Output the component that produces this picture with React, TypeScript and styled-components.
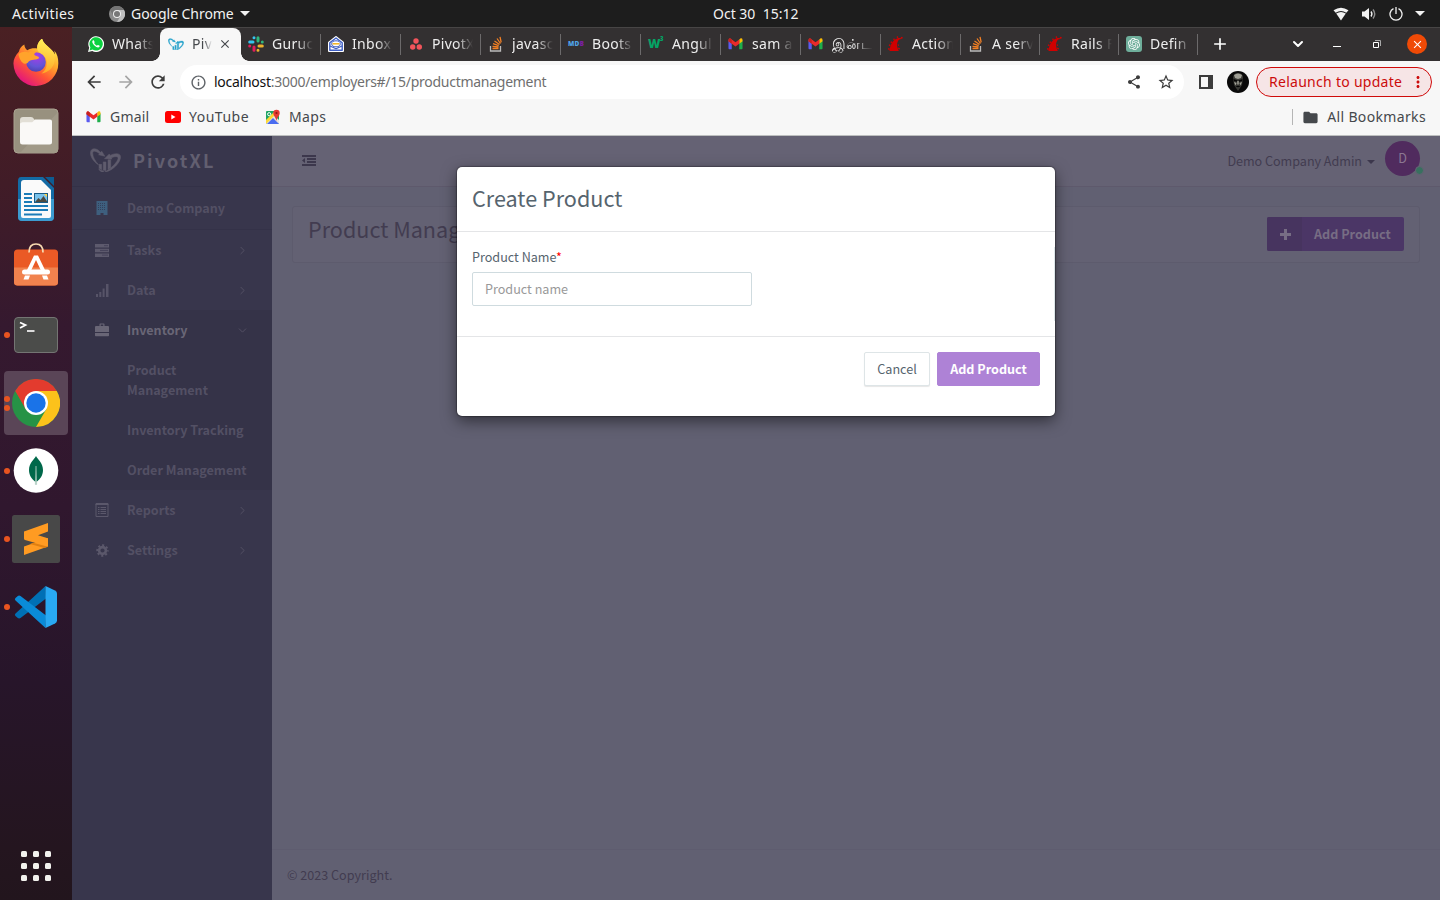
import React from "react";
import styled, { createGlobalStyle, css } from "styled-components";
import { SiOpenai } from "react-icons/si";
import { MdArrowBack, MdArrowForward, MdRefresh, MdShare, MdStarBorder, MdInfoOutline, MdFolder, MdAdd, MdClose, MdMoreVert } from "react-icons/md";
import { ChevronRight, ChevronDown } from "lucide-react";

const GlobalStyle = createGlobalStyle`
  *, *::before, *::after { box-sizing: border-box; }
  html, body { margin: 0; padding: 0; }
  body { width: 1440px; height: 900px; overflow: hidden; }
  svg { display: block; flex: none; }
  button, input { font: inherit; margin: 0; }
`;

const desktopFont = `"Noto Sans", "Open Sans", sans-serif`;
const appFont = `"Noto Sans CJK SC", "Noto Sans", sans-serif`;

/* ---------- desktop ---------- */

const Desktop = styled.div`
  width: 1440px;
  height: 900px;
  display: flex;
  flex-direction: column;
  overflow: hidden;
  background: #1d1d1d;
  font-family: ${desktopFont};
`;

const SystemBar = styled.header`
  height: 27px;
  flex: none;
  display: grid;
  grid-template-columns: 701px auto 1fr;
  align-items: center;
  padding: 0 15px 0 12px;
  color: #f2f2f2;
  font-size: 14px;
  line-height: 26px;
`;

const SystemLeft = styled.div`
  display: flex;
  align-items: center;
`;

const SystemText = styled.span<{ $spacing?: number; $width?: number }>`
  letter-spacing: ${(p) => p.$spacing ?? 0}px;
  width: ${(p) => (p.$width ? `${p.$width}px` : "auto")};
  white-space: pre;
`;

const AppMenu = styled.div`
  display: flex;
  align-items: center;
  margin-left: 34px;
  gap: 6px;
`;

const Caret = styled.span<{ $size?: number; $color?: string }>`
  width: 0;
  height: 0;
  border-left: ${(p) => p.$size ?? 5}px solid transparent;
  border-right: ${(p) => p.$size ?? 5}px solid transparent;
  border-top: ${(p) => p.$size ?? 5}px solid ${(p) => p.$color ?? "#f2f2f2"};
`;

const SystemTray = styled.div`
  display: flex;
  align-items: center;
  justify-content: flex-end;
  gap: 12px;
`;

const Workspace = styled.div`
  flex: 1;
  min-height: 0;
  display: flex;
`;

const Dock = styled.nav`
  width: 72px;
  flex: none;
  display: flex;
  flex-direction: column;
  align-items: center;
  gap: 4px;
  padding: 4px 0 2px;
  background: linear-gradient(#4a2023 0%, #411c27 18%, #35192f 34%, #30172e 55%, #27152a 75%, #24151f 94%, #22151d 100%);
`;

const DockItem = styled.div<{ $active?: boolean; $last?: boolean }>`
  position: relative;
  width: 64px;
  height: 64px;
  flex: none;
  display: flex;
  align-items: center;
  justify-content: center;
  border-radius: 4px;
  background: ${(p) => (p.$active ? "#5a4557" : "transparent")};
  ${(p) => p.$last && css`margin-top: auto;`}
`;

const RunningDots = styled.span`
  position: absolute;
  left: 0;
  top: 0;
  height: 100%;
  display: flex;
  flex-direction: column;
  justify-content: center;
  gap: 3px;
  i {
    width: 6px;
    height: 6px;
    border-radius: 50%;
    background: #e95420;
  }
`;

/* ---------- browser ---------- */

const Browser = styled.main`
  flex: 1;
  min-width: 0;
  display: flex;
  flex-direction: column;
  background: #f7f7f7;
`;

const TabStrip = styled.div`
  height: 34px;
  flex: none;
  display: flex;
  padding-left: 8px;
  background: #333031;
  border-top: 1px solid #474545;
  color: #eeeeee;
`;

const Tab = styled.div<{ $active?: boolean; $width?: number; $divider?: boolean }>`
  position: relative;
  width: ${(p) => p.$width ?? 80}px;
  flex: none;
  display: flex;
  align-items: center;
  gap: 8px;
  padding: 0 0 1px 8px;
  ${(p) =>
    p.$active &&
    css`
      width: 81px;
      margin-right: -1px;
      color: #45484c;
      background: #f7f7f7;
      border-radius: 8px 8px 0 0;
      z-index: 1;
      &::before,
      &::after {
        content: "";
        position: absolute;
        bottom: 0;
        width: 8px;
        height: 8px;
      }
      &::before {
        left: -8px;
        background: radial-gradient(circle at 0 0, transparent 7.5px, #f7f7f7 8px);
      }
      &::after {
        right: -8px;
        background: radial-gradient(circle at 100% 0, transparent 7.5px, #f7f7f7 8px);
      }
    `}
  ${(p) =>
    p.$divider &&
    css`
      &::after {
        content: "";
        position: absolute;
        right: -1px;
        top: 6px;
        width: 1px;
        height: 21px;
        background: #6c6a6b;
      }
    `}
`;

const TabIcon = styled.span`
  width: 16px;
  flex: none;
  display: flex;
  align-items: center;
`;

const TabTitle = styled.span<{ $width?: number; $spacing?: number }>`
  width: ${(p) => p.$width ?? 41}px;
  overflow: hidden;
  white-space: pre;
  font-size: 14px;
  line-height: 20px;
  letter-spacing: ${(p) => p.$spacing ?? 0.3}px;
  mask-image: linear-gradient(90deg, #000 60%, transparent 100%);
`;

const TabClose = styled.span`
  margin-left: -2px;
`;

const WindowControls = styled.div`
  flex: 1;
  display: flex;
  align-items: center;
  padding: 0 0 1px 13px;
`;

const ControlGlyph = styled.span<{ $gap: number }>`
  margin-left: ${(p) => p.$gap}px;
`;

const CloseWindow = styled.span`
  width: 20px;
  height: 20px;
  margin-left: 26px;
  display: flex;
  align-items: center;
  justify-content: center;
  border-radius: 50%;
  background: #f04a06;
  color: #fff;
`;

const Toolbar = styled.div`
  height: 42px;
  flex: none;
  display: flex;
  align-items: center;
  padding: 0 8px 0 12px;
  color: #3c3c3c;
`;

const NavButtons = styled.div`
  width: 96px;
  display: flex;
  gap: 12px;
  svg:nth-child(2) { color: #a5a5a5; }
`;

const AddressBar = styled.div`
  width: 1004px;
  height: 34px;
  display: flex;
  align-items: center;
  padding: 0 9px 0 10px;
  border-radius: 17px;
  background: #fff;
`;

const Url = styled.span`
  flex: 1;
  margin-left: 7px;
  color: #6f6f6f;
  font-size: 14px;
  letter-spacing: -0.27px;
  line-height: 20px;
  b { font-weight: 400; color: #111; }
`;

const AddressActions = styled.div`
  display: flex;
  align-items: center;
  gap: 15px;
`;

const SidePanelIcon = styled.span`
  width: 14px;
  height: 14px;
  margin-left: 15px;
  border: 2px solid #3c3c3c;
  border-right-width: 5px;
`;

const Avatar = styled.span`
  margin: 0 7px 0 14px;
`;

const Relaunch = styled.div`
  width: 176px;
  height: 30px;
  display: flex;
  align-items: center;
  justify-content: space-between;
  padding: 0 4px 1px 12px;
  border: 1px solid #d00a0a;
  border-radius: 15px;
  background: #f6e5e6;
  color: #cc0c0c;
  font-size: 14px;
  letter-spacing: 0.28px;
  line-height: 26px;
  white-space: nowrap;
`;

const BookmarkBar = styled.div`
  height: 33px;
  flex: none;
  display: flex;
  align-items: center;
  padding: 0 14px 1px;
  border-bottom: 1px solid #bdbfbf;
  color: #45484c;
  font-size: 14px;
`;

const Bookmark = styled.div<{ $width?: number; $spacing?: number }>`
  display: flex;
  align-items: center;
  gap: 8px;
  height: 20px;
  margin-top: -3px;
  width: ${(p) => (p.$width ? `${p.$width}px` : "auto")};
  letter-spacing: ${(p) => p.$spacing ?? 0.35}px;
  line-height: 20px;
  white-space: nowrap;
`;

const AllBookmarks = styled(Bookmark)`
  margin-left: auto;
  padding-left: 9px;
  height: 16px;
  border-left: 1px solid #b5b5b5;
`;

/* ---------- web application ---------- */

const WebApp = styled.section`
  position: relative;
  flex: 1;
  min-height: 0;
  display: flex;
  font-family: ${appFont};
  font-size: 12.6px;
  line-height: 20px;
  background: #616072;
  color: #423c50;
`;

const Sidebar = styled.aside`
  width: 200px;
  flex: none;
  background: #38364c;
  color: #535064;
  font-weight: 700;
`;

const Brand = styled.div`
  height: 51px;
  display: flex;
  align-items: center;
  gap: 12px;
  padding: 0 0 2px 18px;
  border-bottom: 1px solid #333147;
  color: #625f70;
  font-size: 18px;
  letter-spacing: 2.1px;
`;

const CompanyRow = styled.div`
  height: 43px;
  display: flex;
  align-items: center;
  padding-left: 22px;
  border-bottom: 1px solid #343248;
`;

const MenuRow = styled.div<{ $lit?: boolean }>`
  height: 40px;
  display: flex;
  align-items: center;
  padding: 0 23px 0 22px;
  color: ${(p) => (p.$lit ? "#696676" : "inherit")};
`;

const MenuIcon = styled.span`
  width: 16px;
  margin-right: 17px;
  display: flex;
  justify-content: center;
`;

const MenuLabel = styled.span`
  flex: 1;
  letter-spacing: -0.02px;
`;

const OpenSection = styled.div`
  background: #353348;
`;

const SubItem = styled.div`
  padding: 10px 20px 10px 55px;
  letter-spacing: -0.02px;
`;

const Content = styled.div`
  flex: 1;
  min-width: 0;
  display: flex;
  flex-direction: column;
`;

const AppHeader = styled.div`
  height: 51px;
  flex: none;
  display: flex;
  align-items: center;
  justify-content: space-between;
  padding: 0 20px 2px 30px;
  background: #656274;
  border-bottom: 1px solid #5e596c;
`;

const UserMenu = styled.div`
  display: flex;
  align-items: center;
  gap: 5px;
`;

const UserName = styled.span`
  padding-top: 2px;
  letter-spacing: -0.03px;
`;

const MenuCaret = styled(Caret)`
  margin-top: 4px;
`;

const UserBadge = styled.div`
  position: relative;
  width: 35px;
  height: 35px;
  margin: -4px 0 0 5px;
  border-radius: 50%;
  background: #502b5e;
  color: #8b7792;
  display: flex;
  align-items: center;
  justify-content: center;
`;

const OnlineDot = styled.span`
  position: absolute;
  right: -4px;
  bottom: 1px;
  width: 9px;
  height: 9px;
  border-radius: 50%;
  border: 1px solid #656274;
  background: #38705f;
`;

const TitleCard = styled.div`
  height: 57px;
  margin: 19px 20px 0;
  padding: 10px 15px 0;
  display: flex;
  justify-content: space-between;
  align-items: flex-start;
  border: 1px solid #5d5b6d;
  border-radius: 3px;
  background: #636173;
`;

const PageTitle = styled.h1`
  margin: 0;
  font-size: 21.6px;
  font-weight: 400;
  line-height: 24px;
`;

const AddButton = styled.div`
  width: 137px;
  height: 34px;
  display: flex;
  align-items: center;
  border-radius: 2px;
  background: #4b3666;
  color: #776d84;
  font-weight: 700;
`;

const AddButtonIcon = styled.span`
  width: 35px;
  height: 34px;
  margin-right: 12px;
  padding-left: 13px;
  display: flex;
  align-items: center;
  background: #47345f;
  border-radius: 2px 0 0 2px;
`;

const Footer = styled.footer`
  height: 51px;
  margin-top: auto;
  padding: 15px;
  border-top: 1px solid #5e5c6f;
`;

const Modal = styled.div`
  position: absolute;
  left: 385px;
  top: 31px;
  width: 598px;
  height: 249px;
  display: flex;
  flex-direction: column;
  border-radius: 5px;
  background: #fff;
  box-shadow: 0 0 1px 1px rgba(0, 0, 0, 0.25), 0 5px 15px rgba(0, 0, 0, 0.5);
  color: #56646e;
`;

const ModalHeader = styled.h2`
  height: 65px;
  margin: 0;
  padding: 18px 15px;
  border-bottom: 1px solid #e4e5e7;
  font-size: 21.6px;
  font-weight: 400;
  line-height: 26px;
`;

const ModalBody = styled.div`
  height: 105px;
  display: flex;
  padding: 15px 0 15px 15px;
  border-bottom: 1px solid #e4e5e7;
`;

const Field = styled.label`
  display: flex;
  flex-direction: column;
  gap: 5px;
  width: 280px;
`;

const Required = styled.span`
  color: #f00;
`;

const TextInput = styled.input`
  width: 280px;
  height: 34px;
  padding: 0 12px 2px;
  border: 1px solid #cfdbdf;
  border-radius: 2px;
  outline: none;
  background: #fff;
  &::placeholder { color: #999; opacity: 1; }
`;

const BodyEdge = styled.span`
  width: 1px;
  margin-left: auto;
  background: #dde6e9;
`;

const ModalFooter = styled.div`
  display: flex;
  justify-content: flex-end;
  gap: 7px;
  padding: 15px;
`;

const ModalButton = styled.button<{ $primary?: boolean }>`
  width: ${(p) => (p.$primary ? 103 : 66)}px;
  height: 34px;
  padding: 0;
  border: 1px solid ${(p) => (p.$primary ? "#ae82d6" : "#dee5e7")};
  border-radius: 2px;
  background: ${(p) => (p.$primary ? "#ae82d6" : "#fff")};
  color: ${(p) => (p.$primary ? "#fff" : "#56646e")};
  font-weight: ${(p) => (p.$primary ? 700 : 400)};
  box-shadow: ${(p) => (p.$primary ? "none" : "0 1px 1px rgba(90, 90, 90, 0.15)")};
`;

/* ---------- icons ---------- */

const GmailIcon = ({ w = 14 }: { w?: number }) => (
  <svg width={w} height={w * 0.75} viewBox="0 0 15 12">
    <path d="M0 2.500v8.500q0 1 1 1h2.500V5z" fill="#5b5bf0" />
    <path d="M15 2.500v8.500q0 1-1 1h-2.500V5z" fill="#1fae4b" />
    <path d="M11.500 1.500L13 .3q2-.6 2 1.700v1.500L11.500 6z" fill="#fbbc04" />
    <path d="M0 3.500V2Q0 .2 1.700.2L7.500 4.500 11.500 1.500V6L7.500 9 3.500 6z" fill="#ea2a2a" />
    <path d="M0 2Q0 .2 1.700.2L3.500 1.600V6L0 3.500z" fill="#c5221f" />
  </svg>
);

const PivotLogo = ({ w, color }: { w: number; color: string }) => (
  <svg width={w} height={w * 0.8} viewBox="0 0 31 25" fill={color} stroke={color} strokeWidth=".5" strokeLinejoin="round">
    <path d="M.3 5C.3.5 4.500-.3 8 2l2.500 2.300L11.800 3.300l3 5L8.500 6.800l1-1C6.500 3.200 2.600 2 2.600 5.200c0 4 2.500 7.800 5.900 11.800C3.500 14 .3 9 .3 5z" />
    <path d="M14.500 10.800L19.300 6l.9 1.500C24 5.300 30.700 4.500 30.700 9c0 5.500-7.700 14-16.700 15.700C21 21 28 14 28.200 10.200 28 7.800 24 8.800 21.300 9.800l.7 1.400z" />
    <path d="M9 16.500h2.600V22L9 20.500zM13.200 14H16v9l-2.800-.8zM18 11.800h2.800V20L18 21.800z" />
    <path d="M8.500 21q3 2.500 5.500 2l-1 1.700q-3-.7-4.500-3.700z" />
  </svg>
);

const SlackIcon = () => (
  <svg width="16" height="16" viewBox="0 0 16 16" strokeWidth="3" strokeLinecap="round">
    <path d="M1.700 6H5M6 1.700v0" stroke="#36c5f0" />
    <path d="M10 1.700V5M14.300 6v0" stroke="#2eb67d" />
    <path d="M14.300 10H11M10 14.300v0" stroke="#ecb22e" />
    <path d="M6 14.300V11M1.700 10v0" stroke="#e01e5a" />
  </svg>
);

const InboxIcon = () => (
  <svg width="16" height="16" viewBox="0 0 16 16" fill="none" strokeLinejoin="round">
    <path d="M1 6.500L8 1l7 5.500V15H1z" fill="#fff" stroke="#fff" strokeWidth="2" />
    <path d="M1.800 6.800L8 2l6.200 4.800v7.500H1.800z" fill="#fff" stroke="#3f5fc4" strokeWidth="1.400" />
    <ellipse cx="8" cy="7.800" rx="4.300" ry="3" fill="#fff" stroke="#3f5fc4" />
    <path d="M4.500 7.800h7" stroke="#f2b21c" strokeWidth="1.500" />
    <path d="M2 10l6 2.800 6-2.800" stroke="#3f5fc4" strokeWidth="1.200" />
  </svg>
);

const AsanaIcon = () => (
  <svg width="16" height="16" viewBox="0 0 16 16" fill="#f2545b">
    <circle cx="8" cy="5" r="2.700" />
    <circle cx="4.700" cy="11" r="2.700" />
    <circle cx="11.300" cy="11" r="2.700" />
  </svg>
);

const StackIcon = () => (
  <svg width="16" height="16" viewBox="0 0 16 16" fill="none" stroke="#f48024" strokeWidth="1.300">
    <path d="M2.500 10v5h10v-5" stroke="#bcbbbb" />
    <path d="M4.500 12.500h6M4.500 10.300l6 .7M5 7.700l5.700 2M6.500 5l5 3.500M9 2.500l3.500 5M12 .8l1.200 5.500" />
  </svg>
);

const RailsIcon = () => (
  <svg width="16" height="16" viewBox="0 0 16 16" fill="#d10000">
    <path d="M1.500 15C2 9.500 4.500 4 9.200 2.400c2-.6 4-.2 4.800.7-2-.2-3.200.6-4 2-1.700 2.900-1 6.500.8 9.900z" />
    <path d="M.2 12l1.600.4-.3 1.500L0 13.600zM1.200 8.300l1.500.6-.6 1.300L.7 9.600zM3.200 5.200l1.300.9-.9 1.100L2.300 6.300zM6.200 2.200l.8 1.300-1.200.7-.8-1.300zM10 .3l.3 1.500-1.400.2-.2-1.400zM13.200.8l1.800.6-.8 1.400-1.600-.6zM9.800 8.200l1.400.5-.3 1.200-1.200-.3zM10.300 11.500l1.700.8-.4 1.200-1.500-.6z" />
  </svg>
);

const MdbMark = styled.span`
  display: block;
  width: 16px;
  font: 800 6.500px/16px "Open Sans", sans-serif;
  letter-spacing: 0.2px;
  color: #4fa3e8;
  b { color: #7b1fa2; }
`;

const W3Mark = styled.span`
  width: 16px;
  display: flex;
  font: 800 12px/16px "Open Sans", sans-serif;
  letter-spacing: -0.5px;
  color: #04a465;
  sup { font-size: 6px; line-height: 7px; }
`;

const OpenAiMark = styled.span`
  width: 16px;
  height: 16px;
  display: flex;
  align-items: center;
  justify-content: center;
  border-radius: 3px;
  background: #6fae9b;
  color: #fff;
`;

const WhatsappMark = () => (
  <svg width="16" height="16" viewBox="0 0 16 16">
    <path d="M0 16l1.200-4.200A7.900 7.900 0 1 1 4.300 15z" fill="#fff" />
    <path d="M1.500 14.500l.9-3.100a6.700 6.700 0 1 1 2.200 2.200z" fill="#0bd13f" />
    <path d="M5 4.300c-1.500 1-.6 3.300 1.400 5.200s4.100 2.600 5.100 1.200c.3-.6.200-.9-.2-1.100l-1.300-.6c-.4-.2-.6.100-1 .7-1.300-.4-2.400-1.500-2.900-2.600.4-.5.700-.7.500-1.100l-.6-1.300c-.2-.5-.5-.6-1-.4z" fill="#fff" />
  </svg>
);

const YoutubeMark = () => (
  <svg width="16" height="12" viewBox="0 0 16 12">
    <rect width="16" height="12" rx="2.500" fill="#f00" />
    <path d="M6.300 3.500v5L10.500 6z" fill="#fff" />
  </svg>
);

const MapsMark = () => (
  <svg width="16" height="16" viewBox="0 0 16 16">
    <rect x="1" y="2" width="13" height="13" rx="1" fill="#1fa463" />
    <path d="M1 14L9 6l5 5v3q0 1-1 1H2q-1 0-1-1z" fill="#e9e5dc" />
    <path d="M2 15l6-6 6 6z" fill="#4a6cf0" />
    <path d="M1 11l8-8 2 2L1 15z" fill="#fdd835" />
    <circle cx="4.200" cy="5.200" r="1.600" fill="none" stroke="#fff" />
    <path d="M11.500 12C11 8.500 8.300 7 8.300 4a3.200 3.200 0 0 1 6.400 0c0 3-2.700 4.500-3.200 8z" fill="#e53935" />
    <circle cx="11.500" cy="4" r="1.100" fill="#8e1b13" />
  </svg>
);

const ProfilePhoto = () => (
  <svg width="22" height="22" viewBox="0 0 22 22">
    <circle cx="11" cy="11" r="11" fill="#0a0a0a" />
    <path d="M6 7c0-3 2-5 5-5s5.500 2 5 5l-1 7-4 6-4-6z" fill="#383834" />
    <path d="M7 4q4-3 8 0l-1 3-3 1-3-1z" fill="#a0a096" />
    <path d="M6.500 8l4 1.500V11L7 10zM15.500 8l-4 1.500V11l3.500-1z" fill="#050505" />
    <path d="M10.300 10h1.400v3.500h-1.400zM7 11l2.500 1-1 2.500zM15 11l-2.500 1 1 2.500z" fill="#a5a59b" />
    <path d="M8.500 15.500q2.500-1.500 5 0l-2.500.7z" fill="#050505" />
  </svg>
);

const ChromeGrey = () => (
  <svg width="16" height="16" viewBox="0 0 16 16">
    <circle cx="8" cy="8" r="8" fill="#8b8b8b" />
    <path d="M1 4A8 8 0 0 1 15 4H8L4.600 10z" fill="#747474" />
    <path d="M15 4A8 8 0 0 1 8 16l3.500-6L8 4z" fill="#bdbdbd" />
    <circle cx="8" cy="8" r="4" fill="#eee" />
    <circle cx="8" cy="8" r="3" fill="#777" />
  </svg>
);

const FirefoxIcon = () => (
  <svg width="48" height="48" viewBox="0 0 48 48">
    <defs>
      <linearGradient id="foxBody" x1=".85" y1=".1" x2=".25" y2=".95">
        <stop offset="0" stopColor="#fff14f" />
        <stop offset=".35" stopColor="#ffa62b" />
        <stop offset=".65" stopColor="#ff5634" />
        <stop offset="1" stopColor="#e3157d" />
      </linearGradient>
      <radialGradient id="foxGlobe" cx=".55" cy=".2" r=".9">
        <stop offset="0" stopColor="#a83bea" />
        <stop offset=".6" stopColor="#6355d6" />
        <stop offset="1" stopColor="#4a3aa6" />
      </radialGradient>
      <linearGradient id="foxMane" x1=".5" y1="0" x2=".4" y2="1">
        <stop offset="0" stopColor="#fff35a" />
        <stop offset="1" stopColor="#ffa726" />
      </linearGradient>
    </defs>
    <g transform="translate(0 -1)">
      <path d="M30 .5c-4 3.500-5 7-4.800 10-3-.7-7-.2-9.700 1.700C13.500 11 12.500 9 12.300 6.500 9 8 7.500 11 7 13.500 3 18 1.200 22 1.500 26A22.400 22.400 0 0 0 46.300 25c0-5-1-9-4-12.500.5 2 .5 3 .3 4C40.500 10 32 8 30 .5z" fill="url(#foxBody)" />
      <path d="M30 .5c-4.500 4-5.500 8-4.500 11.500 1 3.500 8 5 9 10.500 1 6-1 10-5 13 7-1 12-6 13-12 .4-2.500.4-4.500.1-7C40.500 10 32 8 30 .5z" fill="url(#foxMane)" />
      <circle cx="24" cy="24" r="9.800" fill="url(#foxGlobe)" />
      <path d="M6.500 16c3-2.500 7-3 10-1.500 2-1.500 5.500-1.700 8-.5-2 .8-2.500 2-2 3 1.500 1.300 4.300 1.200 4.500 2.500.2 1.500-2.500 2-5 2.200-3 .3-5 .8-6.500 3.300C10 28 7 20 6.500 16z" fill="#ffa32b" />
    </g>
  </svg>
);

const FilesIcon = () => (
  <svg width="48" height="48" viewBox="0 0 48 48">
    <rect x="2" y="2" width="44" height="44" rx="4" fill="#98917f" stroke="#aaa391" />
    <path d="M46 5v37q0 4-4 4H8z" fill="#a19a88" />
    <path d="M8 13q0-3 3-3h8q2 0 3 2l1 1.500h14v20H8z" fill="#e2dfd6" />
    <rect x="8" y="15.500" width="32" height="22" rx="2.500" fill="#faf9f7" />
    <path d="M8 18q0-2.500 2.500-2.500H20l3-3h15q2 0 2 2V20H8z" fill="#faf9f7" />
  </svg>
);

const WriterIcon = () => (
  <svg width="48" height="48" viewBox="0 0 48 48">
    <path d="M9 2h22l11 11v29q0 4-4 4H10q-4 0-4-4V6q0-4 3-4z" fill="#136ba5" />
    <path d="M6 24h36v18q0 4-4 4H10q-4 0-4-4z" fill="#3c9bd0" />
    <path d="M12 5h17l10 10v26q0 2-2 2H11q-2 0-2-2V8q0-3 3-3z" fill="#fafafa" />
    <path d="M33 2h9v9z" fill="#0d5c92" />
    <path d="M12 19h8M12 23h8M12 27h8M12 31h24M12 35h24M12 39.500h18" stroke="#1b7cb8" strokeWidth="2" />
    <rect x="22.500" y="18.500" width="13" height="9" fill="#79c3ec" stroke="#1a5c86" />
    <path d="M23 27l3.500-4 2 2 3-4 4 6z" fill="#4d4a40" />
    <path d="M32 19h3v3z" fill="#ffd54a" />
  </svg>
);

const SoftwareIcon = () => (
  <svg width="48" height="48" viewBox="0 0 48 48">
    <rect x="2" y="6.500" width="44" height="36" rx="3.500" fill="#ea5a26" />
    <path d="M2 24.500h44v14.500q0 3.500-3.500 3.500h-37Q2 42.500 2 39z" fill="#f1824e" />
    <path d="M17 9.500q0-8.500 7-8.500t7 8.500" fill="none" stroke="#f7d9b0" strokeWidth="1.700" />
    <path d="M22 12.500h4l7 14.500h-4.300L24 17l-4.700 10H15z" fill="#fff" />
    <rect x="10" y="26.500" width="28" height="5" rx="2.500" fill="#fff" />
    <path d="M13 32.500h5l-1.500 4h-5zM30 32.500h5l1.500 4h-5z" fill="#fff" />
  </svg>
);

const TerminalIcon = () => (
  <svg width="48" height="48" viewBox="0 0 48 48" fill="none">
    <rect x="2.500" y="6.500" width="43" height="35" rx="3.500" fill="#4b4c4a" stroke="#747573" />
    <path d="M8 11.500l5.500 2.500L8 17" stroke="#fff" strokeWidth="1.800" />
    <path d="M15 20h7.500" stroke="#fff" strokeWidth="1.600" />
  </svg>
);

const ChromeIcon = () => (
  <svg width="48" height="48" viewBox="0 0 48 48">
    <circle cx="24" cy="24" r="24" fill="#269346" />
    <path d="M3.200 12A24 24 0 0 1 44.800 12H24L13.600 30z" fill="#e33b2e" />
    <path d="M44.800 12A24 24 0 0 1 24 48l10.400-18L24 12z" fill="#fcc21b" />
    <circle cx="24" cy="24" r="12" fill="#fff" />
    <circle cx="24" cy="24" r="9.700" fill="#1a73e8" />
  </svg>
);

const MongoIcon = () => (
  <svg width="48" height="48" viewBox="0 0 48 48">
    <circle cx="24" cy="23.500" r="22.300" fill="#fff" />
    <path d="M24 9c1.500 3.500 7 6.500 7 14 0 5.500-3 9-6 11.500h-2c-3-2.500-6-6-6-11.500 0-7.500 5.500-10.500 7-14z" fill="#00684a" />
    <path d="M24 19l.7 18.500h-1.400z" fill="#a9c9bd" stroke="#a9c9bd" strokeWidth=".5" />
  </svg>
);

const SublimeIcon = () => (
  <svg width="48" height="48" viewBox="0 0 48 48">
    <rect width="48" height="48" rx="2.500" fill="#484848" />
    <path d="M12 31.500L36 23v8.500L12 40z" fill="#ff9b22" />
    <path d="M12 16.500L36 8v8.500L26 20.200l9 2.700q1 .4 1 1.500v7.100L13 25q-1-.4-1-1.500z" fill="#ff9b22" />
    <path d="M21 27.700l15 4-3.500 1.200L18 29z" fill="#e07f10" />
  </svg>
);

const CodeIcon = () => (
  <svg width="48" height="48" viewBox="0 0 48 48">
    <path d="M33.500 3L34 15.500 8.500 35q-1.500 1-3-.3L3.500 33q-1.300-1.300 0-2.600z" fill="#0070b5" />
    <path d="M33.500 45L34 32.500 8.500 13q-1.500-1-3 .3L3.500 15q-1.300 1.300 0 2.600z" fill="#0a8bd8" />
    <path d="M33.500 3L43 7.500q2 1 2 3v27q0 2-2 3L33.500 45z" fill="#29a9f2" />
  </svg>
);

const AppGridIcon = () => (
  <svg width="30" height="30" viewBox="0 0 30 30" fill="#f2f2ee">
    {[0, 12, 24].map((y) => [0, 12, 24].map((x) => <rect key={`${x}-${y}`} x={x} y={y} width="6" height="6" rx="1.500" />))}
  </svg>
);

const WifiIcon = () => (
  <svg width="16" height="14" viewBox="0 0 16 14" fill="#f2f2f2">
    <path d="M8 13.500L3.200 6.500Q8 3.500 12.800 6.500z" />
    <path d="M2.700 5.700L.5 3.200Q8-1.800 15.500 3.200l-2.200 2.500Q8 2.300 2.700 5.700z" />
  </svg>
);

const VolumeIcon = () => (
  <svg width="16" height="14" viewBox="0 0 16 14" fill="none">
    <path d="M1 4.500h2.500L8 1v12L3.500 9.500H1z" fill="#f2f2f2" />
    <path d="M10 4.500q1.800 2.500 0 5" stroke="#f2f2f2" strokeWidth="1.400" />
    <path d="M12 2.500q3.500 4.500 0 9" stroke="#8e8e8e" strokeWidth="1.400" />
  </svg>
);

const PowerIcon = () => (
  <svg width="14" height="14" viewBox="0 0 14 14" fill="none" stroke="#f2f2f2" strokeWidth="1.300">
    <path d="M4.500 1.700a6 6 0 1 0 5 0M7 0v7" />
  </svg>
);

const BuildingIcon = () => (
  <svg width="12" height="14" viewBox="0 0 12 14">
    <path d="M.5 0h11v14H7.500v-2h-3v2h-4z" fill="#3e5f7e" />
    <path d="M2 2.500h8M2 4.500h8M2 6.500h8M2 8.500h8" stroke="#34405c" strokeDasharray="1 1" />
  </svg>
);

const TasksIcon = () => (
  <svg width="14" height="13" viewBox="0 0 14 13" fill="#5d5a6d">
    <path d="M0 0h14v3.500H0zM0 4.700h14v3.500H0zM0 9.400h14v3.500H0z" />
    <path d="M9 1.700h4M5 6.400h8M7 11.100h6" stroke="#45425a" />
  </svg>
);

const SignalIcon = () => (
  <svg width="14" height="14" viewBox="0 0 14 14" fill="#575468">
    <path d="M1 11h2v3H1zM4.300 9h2v5h-2zM7.600 5.500h2V14h-2zM11 1h2.500v13H11z" />
  </svg>
);

const BriefcaseIcon = () => (
  <svg width="14" height="14" viewBox="0 0 14 14" fill="#696676">
    <path d="M4.500 3V1.200Q4.500.4 5.300.4h3.400q.8 0 .8.800V3H13q1 0 1 1v5H0V4q0-1 1-1zM5.700 3h2.600V1.600H5.700zM0 10h14v2.500q0 .8-.8.8H.8q-.8 0-.8-.8z" />
  </svg>
);

const ListIcon = () => (
  <svg width="14" height="14" viewBox="0 0 14 14" fill="none" stroke="#5b586b">
    <path d="M1 .5h12v13H1zM.5 1.500h13" />
    <path d="M3 4.500h1.500M5.500 4.500H11M3 6.500h1.500M5.500 6.500H11M3 8.500h1.500M5.500 8.500H11M3 10.500h1.500M5.500 10.500H11" />
  </svg>
);

const CogIcon = () => (
  <svg width="13" height="13" viewBox="0 0 13 13" fill="none" stroke="#5b586b">
    <circle cx="6.500" cy="6.500" r="3.400" strokeWidth="2.600" />
    <circle cx="6.500" cy="6.500" r="5.300" strokeWidth="1.800" strokeDasharray="2.100 2.060" strokeDashoffset="1" />
  </svg>
);

const IndentIcon = () => (
  <svg width="14" height="11" viewBox="0 0 14 11" fill="#3c374c">
    <path d="M0 0h14v2H0zM5 3h9v2H5zM5 6h9v2H5zM0 9h14v2H0zM3 3v5L0 5.500z" />
  </svg>
);

const PlusIcon = () => (
  <svg width="11" height="11" viewBox="0 0 11 11" fill="#776d84">
    <path d="M4 0h3v4h4v3H7v4H4V7H0V4h4z" />
  </svg>
);

/* ---------- data ---------- */

const dockItems = [
  { icon: <FirefoxIcon />, dots: 0 },
  { icon: <FilesIcon />, dots: 0 },
  { icon: <WriterIcon />, dots: 0 },
  { icon: <SoftwareIcon />, dots: 0 },
  { icon: <TerminalIcon />, dots: 1 },
  { icon: <ChromeIcon />, dots: 2, active: true },
  { icon: <MongoIcon />, dots: 1 },
  { icon: <SublimeIcon />, dots: 1 },
  { icon: <CodeIcon />, dots: 1 },
];

const tabs = [
  { icon: <SlackIcon />, title: "Guruc" },
  { icon: <InboxIcon />, title: "Inbox" },
  { icon: <AsanaIcon />, title: "PivotX" },
  { icon: <StackIcon />, title: "javasc" },
  { icon: <MdbMark>MD<b>B</b></MdbMark>, title: "Boots" },
  { icon: <W3Mark>W<sup>3</sup></W3Mark>, title: "Angul" },
  { icon: <GmailIcon w={15} />, title: "sam a" },
  { icon: <GmailIcon w={15} />, title: "இன்ட" },
  { icon: <RailsIcon />, title: "Action" },
  { icon: <StackIcon />, title: "A serv", width: 79 },
  { icon: <RailsIcon />, title: "Rails F", width: 79 },
  { icon: <OpenAiMark><SiOpenai size={12} /></OpenAiMark>, title: "Defin", width: 79 },
];

const MenuItem = ({ icon, label, open }: { icon: React.ReactNode; label: string; open?: boolean }) => (
  <MenuRow $lit={open}>
    <MenuIcon>{icon}</MenuIcon>
    <MenuLabel>{label}</MenuLabel>
    {open ? <ChevronDown size={13} strokeWidth={1.8} color="#535064" /> : <ChevronRight size={13} strokeWidth={1.8} color="#535064" />}
  </MenuRow>
);

export default function App() {
  return (
    <Desktop>
      <GlobalStyle />
      <SystemBar>
        <SystemLeft>
          <SystemText $spacing={0.4} $width={63}>Activities</SystemText>
          <AppMenu>
            <ChromeGrey />
            <SystemText $spacing={-0.05}>Google Chrome</SystemText>
            <Caret />
          </AppMenu>
        </SystemLeft>
        <SystemText>{"Oct 30  15:12"}</SystemText>
        <SystemTray>
          <WifiIcon />
          <VolumeIcon />
          <PowerIcon />
          <Caret />
        </SystemTray>
      </SystemBar>
      <Workspace>
        <Dock>
          {dockItems.map((item, i) => (
            <DockItem key={i} $active={item.active}>
              {item.icon}
              <RunningDots>{Array.from({ length: item.dots }, (_, d) => <i key={d} />)}</RunningDots>
            </DockItem>
          ))}
          <DockItem $last><AppGridIcon /></DockItem>
        </Dock>
        <Browser>
          <TabStrip>
            <Tab>
              <TabIcon><WhatsappMark /></TabIcon>
              <TabTitle>Whats</TabTitle>
            </Tab>
            <Tab $active>
              <TabIcon><PivotLogo w={16} color="#28a3cc" /></TabIcon>
              <TabTitle $width={20}>Piv</TabTitle>
              <TabClose><MdClose size={14} /></TabClose>
            </Tab>
            {tabs.map((tab, i) => (
              <Tab key={i} $width={tab.width} $divider>
                <TabIcon>{tab.icon}</TabIcon>
                <TabTitle>{tab.title}</TabTitle>
              </Tab>
            ))}
            <WindowControls>
              <MdAdd size={20} color="#fff" />
              <ControlGlyph $gap={60}><ChevronDown size={16} strokeWidth={3} color="#fff" /></ControlGlyph>
              <ControlGlyph $gap={27}>
                <svg width="8" height="8" viewBox="0 0 8 8"><path d="M0 6.500h8" stroke="#fff" /></svg>
              </ControlGlyph>
              <ControlGlyph $gap={32}>
                <svg width="8" height="8" viewBox="0 0 8 8" fill="none" stroke="#fff"><path d="M.5 2.500h5v5h-5z" /><path d="M2 .5h5.500V6" stroke="#aaa" /></svg>
              </ControlGlyph>
              <CloseWindow><MdClose size={13} /></CloseWindow>
            </WindowControls>
          </TabStrip>
          <Toolbar>
            <NavButtons>
              <MdArrowBack size={20} />
              <MdArrowForward size={20} />
              <MdRefresh size={20} />
            </NavButtons>
            <AddressBar>
              <MdInfoOutline size={17} color="#5f6368" />
              <Url><b>localhost</b>:3000/employers#/15/productmanagement</Url>
              <AddressActions>
                <MdShare size={16} />
                <MdStarBorder size={18} />
              </AddressActions>
            </AddressBar>
            <SidePanelIcon />
            <Avatar><ProfilePhoto /></Avatar>
            <Relaunch>
              Relaunch to update
              <MdMoreVert size={18} />
            </Relaunch>
          </Toolbar>
          <BookmarkBar>
            <Bookmark $width={79} $spacing={0.2}><TabIcon><GmailIcon w={15} /></TabIcon>Gmail</Bookmark>
            <Bookmark $width={100} $spacing={0.5}><YoutubeMark />YouTube</Bookmark>
            <Bookmark><MapsMark />Maps</Bookmark>
            <AllBookmarks><MdFolder size={17} />All Bookmarks</AllBookmarks>
          </BookmarkBar>
          <WebApp>
            <Sidebar>
              <Brand><PivotLogo w={31} color="#5f5c6d" />PivotXL</Brand>
              <CompanyRow>
                <MenuIcon><BuildingIcon /></MenuIcon>
                <MenuLabel>Demo Company</MenuLabel>
              </CompanyRow>
              <MenuItem icon={<TasksIcon />} label="Tasks" />
              <MenuItem icon={<SignalIcon />} label="Data" />
              <OpenSection>
                <MenuItem icon={<BriefcaseIcon />} label="Inventory" open />
                <SubItem>Product Management</SubItem>
                <SubItem>Inventory Tracking</SubItem>
                <SubItem>Order Management</SubItem>
              </OpenSection>
              <MenuItem icon={<ListIcon />} label="Reports" />
              <MenuItem icon={<CogIcon />} label="Settings" />
            </Sidebar>
            <Content>
              <AppHeader>
                <IndentIcon />
                <UserMenu>
                  <UserName>Demo Company Admin</UserName>
                  <MenuCaret $size={4} $color="#3c374c" />
                  <UserBadge>D<OnlineDot /></UserBadge>
                </UserMenu>
              </AppHeader>
              <TitleCard>
                <PageTitle>Product Management</PageTitle>
                <AddButton><AddButtonIcon><PlusIcon /></AddButtonIcon>Add Product</AddButton>
              </TitleCard>
              <Footer>© 2023 Copyright.</Footer>
            </Content>
            <Modal>
              <ModalHeader>Create Product</ModalHeader>
              <ModalBody>
                <Field>
                  <span>Product Name<Required>*</Required></span>
                  <TextInput placeholder="Product name" />
                </Field>
                <BodyEdge />
              </ModalBody>
              <ModalFooter>
                <ModalButton>Cancel</ModalButton>
                <ModalButton $primary>Add Product</ModalButton>
              </ModalFooter>
            </Modal>
          </WebApp>
        </Browser>
      </Workspace>
    </Desktop>
  );
}
